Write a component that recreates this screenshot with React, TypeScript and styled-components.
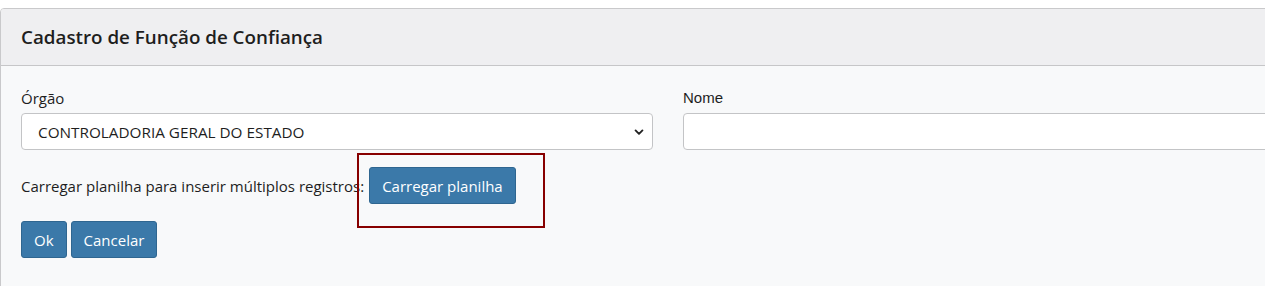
import React from 'react';
import styled, { createGlobalStyle } from 'styled-components';

const GlobalStyle = createGlobalStyle`
  html, body {
    margin: 0;
    padding: 0;
    background: #ffffff;
    overflow: hidden;
  }
  body {
    font-family: 'Open Sans', 'Noto Sans', sans-serif;
    color: #212529;
  }
`;

const Page = styled.div`
  padding-top: 8px;
`;

const Card = styled.div`
  width: 1300px;
  border: 1px solid #c9c9cb;
  border-radius: 4px 0 0 0;
  background: #f8f9fa;
  overflow: hidden;
`;

const CardHeader = styled.div`
  height: 56px;
  display: flex;
  align-items: center;
  padding: 0 20px;
  background: #efeff1;
  border-bottom: 1px solid #c6c6c8;
`;

const Title = styled.h5`
  margin: 0;
  font-size: 18.8px;
  font-weight: 600;
  color: #1e1e1e;
`;

const CardBody = styled.div`
  padding: 22px 20px 30px;
`;

const FieldRow = styled.div`
  display: grid;
  grid-template-columns: 632px 1fr;
  column-gap: 30px;
`;

const Field = styled.div`
  display: flex;
  flex-direction: column;
`;

const Label = styled.label<{ $arial?: boolean }>`
  font-family: ${p => (p.$arial ? "'Liberation Sans', Arial, sans-serif" : "'Open Sans', sans-serif")};
  font-size: 15px;
  line-height: 20px;
  margin-bottom: 5px;
  color: #1e1e1e;
`;

const SelectBox = styled.div`
  height: 37px;
  box-sizing: border-box;
  border: 1px solid #c3c4c6;
  border-radius: 4px;
  background: #ffffff;
  display: flex;
  align-items: center;
  justify-content: space-between;
  padding: 0 8px 0 16px;
  font-size: 15.3px;
  color: #1e1e1e;
`;

const TextInput = styled.input`
  height: 37px;
  box-sizing: border-box;
  border: 1px solid #c3c4c6;
  border-radius: 4px;
  background: #ffffff;
  outline: none;
`;

const UploadRow = styled.div`
  display: flex;
  align-items: center;
  gap: 5px;
  margin-top: 17px;
  font-size: 15px;
  color: #1e1e1e;
`;

const Button = styled.button`
  height: 37px;
  padding: 0 12px;
  border: 1px solid #2f6690;
  border-radius: 3px;
  background: #3b79a9;
  color: #ffffff;
  font-family: 'Open Sans', sans-serif;
  font-size: 15px;
  cursor: pointer;
`;

const Highlight = styled.span`
  position: relative;
  display: inline-flex;
  &::after {
    content: '';
    position: absolute;
    left: -12px;
    top: -14px;
    right: -29px;
    bottom: -24px;
    border: 2px solid #870000;
    pointer-events: none;
  }
`;

const Actions = styled.div`
  display: flex;
  gap: 4px;
  margin-top: 17px;
`;

const Chevron = () => (
  <svg width="10" height="10" viewBox="0 0 16 16">
    <path d="M2.5 5.5l5.5 5.5 5.5-5.5" fill="none" stroke="#222" strokeWidth="3" strokeLinecap="round" strokeLinejoin="round" />
  </svg>
);

export default function App() {
  return (
    <Page>
      <GlobalStyle />
      <Card>
        <CardHeader>
          <Title>Cadastro de Função de Confiança</Title>
        </CardHeader>
        <CardBody>
          <FieldRow>
            <Field>
              <Label>Órgão</Label>
              <SelectBox>
                <span>CONTROLADORIA GERAL DO ESTADO</span>
                <Chevron />
              </SelectBox>
            </Field>
            <Field>
              <Label $arial>Nome</Label>
              <TextInput />
            </Field>
          </FieldRow>
          <UploadRow>
            <span>Carregar planilha para inserir múltiplos registros:</span>
            <Highlight>
              <Button>Carregar planilha</Button>
            </Highlight>
          </UploadRow>
          <Actions>
            <Button>Ok</Button>
            <Button>Cancelar</Button>
          </Actions>
        </CardBody>
      </Card>
    </Page>
  );
}
